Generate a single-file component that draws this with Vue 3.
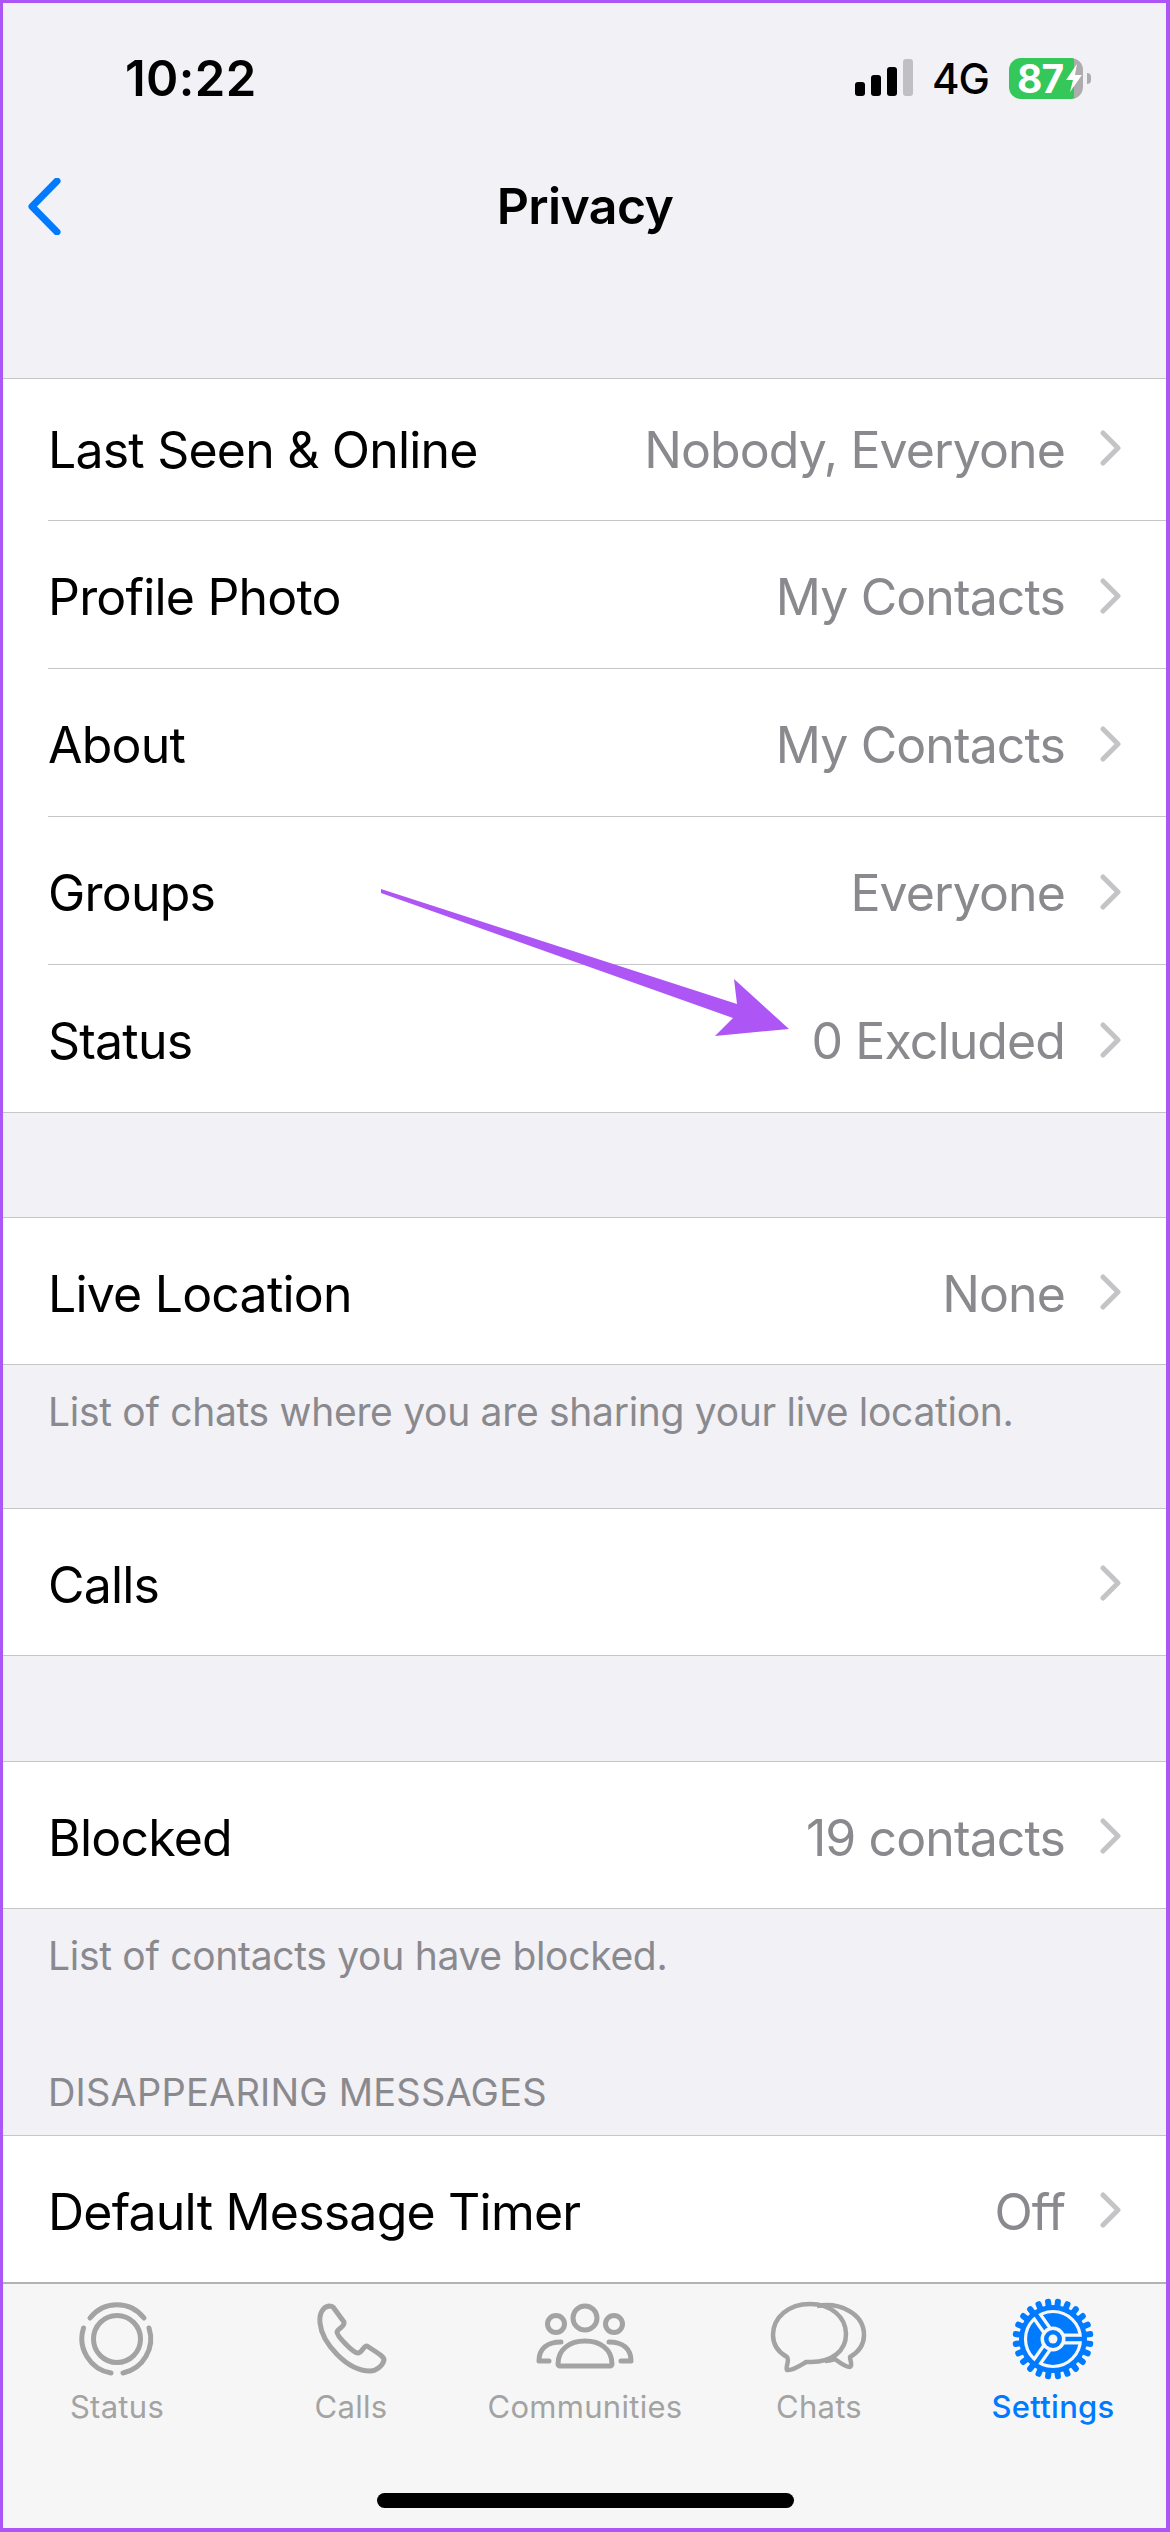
<script setup>
const privacyRows = [
  { label: 'Last Seen & Online', value: 'Nobody, Everyone', first: true },
  { label: 'Profile Photo', value: 'My Contacts' },
  { label: 'About', value: 'My Contacts' },
  { label: 'Groups', value: 'Everyone' },
  { label: 'Status', value: '0 Excluded' },
]
const teeth = Array.from({ length: 24 }, (_, i) => i * 15)
const spokes = [0, 125, 235]
</script>

<template>
  <div class="screen">
    <header class="top">
      <div class="status-bar">
        <span class="time">10:22</span>
        <div class="indicators">
          <div class="signal">
            <i class="b1"></i><i class="b2"></i><i class="b3"></i><i class="b4"></i>
          </div>
          <span class="net">4G</span>
          <div class="battery">
            <div class="battery-body">
              <span class="pct">87</span>
              <svg class="bolt" viewBox="0 0 18 28" width="18" height="28"><path d="M12 0 L1 16 H8 L5 28 L17 11 H10 Z" fill="#fff"/></svg>
            </div>
            <div class="nub"></div>
          </div>
        </div>
      </div>
      <nav class="nav">
        <svg class="back" viewBox="0 0 33 57" width="33" height="57"><path d="M29 3 L4 28.5 L29 54" fill="none" stroke="#007aff" stroke-width="7" stroke-linecap="round" stroke-linejoin="round"/></svg>
        <h1 class="title">Privacy</h1>
      </nav>
    </header>

    <main class="list">
      <section class="group multi">
        <div v-for="r in privacyRows" :key="r.label" class="row" :class="{ short: r.first }">
          <span class="label">{{ r.label }}</span>
          <span class="value">{{ r.value }}</span>
          <svg class="chev" viewBox="0 0 21 36" width="21" height="36"><path d="M3 3 L18 18 L3 33" fill="none" stroke="#c4c4c6" stroke-width="5" stroke-linecap="round" stroke-linejoin="round"/></svg>
        </div>
      </section>

      <section class="group gap-a">
        <div class="row">
          <span class="label">Live Location</span>
          <span class="value">None</span>
          <svg class="chev" viewBox="0 0 21 36" width="21" height="36"><path d="M3 3 L18 18 L3 33" fill="none" stroke="#c4c4c6" stroke-width="5" stroke-linecap="round" stroke-linejoin="round"/></svg>
        </div>
      </section>
      <p class="caption">List of chats where you are sharing your live location.</p>

      <section class="group">
        <div class="row">
          <span class="label">Calls</span>
          <svg class="chev" viewBox="0 0 21 36" width="21" height="36"><path d="M3 3 L18 18 L3 33" fill="none" stroke="#c4c4c6" stroke-width="5" stroke-linecap="round" stroke-linejoin="round"/></svg>
        </div>
      </section>

      <section class="group gap-b">
        <div class="row">
          <span class="label">Blocked</span>
          <span class="value">19 contacts</span>
          <svg class="chev" viewBox="0 0 21 36" width="21" height="36"><path d="M3 3 L18 18 L3 33" fill="none" stroke="#c4c4c6" stroke-width="5" stroke-linecap="round" stroke-linejoin="round"/></svg>
        </div>
      </section>
      <p class="caption">List of contacts you have blocked.</p>

      <p class="section-head">DISAPPEARING MESSAGES</p>
      <section class="group">
        <div class="row">
          <span class="label">Default Message Timer</span>
          <span class="value">Off</span>
          <svg class="chev" viewBox="0 0 21 36" width="21" height="36"><path d="M3 3 L18 18 L3 33" fill="none" stroke="#c4c4c6" stroke-width="5" stroke-linecap="round" stroke-linejoin="round"/></svg>
        </div>
      </section>
    </main>

    <footer class="tabs">
      <div class="tab-row">
        <div class="tab">
          <svg class="ico" viewBox="0 0 80 80" width="80" height="80">
            <g fill="none" stroke="#a3a3a3" stroke-width="5" stroke-linecap="round">
              <circle cx="40" cy="40" r="23.5"/>
              <path d="M13 19 A34 34 0 0 1 67 19"/>
              <path d="M6.5 29 A35 35 0 0 0 34 74"/>
              <path d="M72 29 A35 35 0 0 1 46 74"/>
            </g>
          </svg>
          <span>Status</span>
        </div>
        <div class="tab">
          <svg class="ico" viewBox="0 0 80 80" width="80" height="80">
            <g transform="translate(6 4)">
              <path d="M12 3 C6 4 2 10 3 20 C5 40 30 68 53 68 C60 68 66 62 67 57 C67 54 64 52 50 43 C47 42 45 50 41 50 C36 50 20 33 20 29 C20 26 28 24 27 19 L16 4 C15 3 13 3 12 3 Z" fill="none" stroke="#a3a3a3" stroke-width="5" stroke-linejoin="round"/>
            </g>
          </svg>
          <span>Calls</span>
        </div>
        <div class="tab">
          <svg class="ico wide" viewBox="0 0 100 80" width="100" height="80">
            <g fill="none" stroke="#a3a3a3" stroke-width="5" stroke-linecap="round" stroke-linejoin="round">
              <circle cx="50" cy="19" r="12"/>
              <circle cx="21" cy="25" r="8.5"/>
              <circle cx="79" cy="25" r="8.5"/>
              <path d="M23 65 C23 50 35 42 50 42 C65 42 77 50 77 65 C77 66 76 67 75 67 H25 C24 67 23 66 23 65 Z"/>
              <path d="M26 43 C12 43 4 50 4 62 H14"/>
              <path d="M74 43 C88 43 96 50 96 62 H86"/>
            </g>
          </svg>
          <span>Communities</span>
        </div>
        <div class="tab">
          <svg class="ico wide" viewBox="0 0 100 80" width="100" height="80">
            <g fill="none" stroke="#a3a3a3" stroke-width="4.5" stroke-linejoin="round">
              <path d="M48 7 C70 3 95 14 95 36 C95 47 88 54 81 58 C81 62 84 66 81 68 C76 68 70 63 66 60 C63 61 60 62 56 62"/>
              <path d="M41 5 C20 5 4 18 4 36 C4 46 9 53 18 58 C21 62 16 68 18 71 C24 72 32 66 37 63 C39 63 40 63 42 63 C63 63 77 52 77 35 C77 18 62 5 41 5 Z"/>
            </g>
          </svg>
          <span>Chats</span>
        </div>
        <div class="tab active">
          <svg class="ico" viewBox="-42 -42 84 84" width="84" height="84">
            <rect v-for="a in teeth" :key="a" x="31" y="-3" width="9.5" height="6" rx="2.5" fill="#007aff" :transform="`rotate(${a + 7.5})`"/>
            <circle r="34" fill="#007aff"/>
            <circle r="27.5" fill="none" stroke="#f6f6f6" stroke-width="3.2"/>
            <g v-for="s in spokes" :key="s" :transform="`rotate(${s})`">
              <rect x="0" y="-5.5" width="28" height="11" fill="#f6f6f6"/>
              <rect x="0" y="-2.2" width="33" height="4.4" fill="#007aff"/>
            </g>
            <circle r="12.5" fill="#f6f6f6"/>
            <circle r="9" fill="#007aff"/>
            <circle r="4.5" fill="#f6f6f6"/>
          </svg>
          <span>Settings</span>
        </div>
      </div>
      <div class="home"></div>
    </footer>

    <svg class="arrow" viewBox="0 0 1170 2532" width="1170" height="2532">
      <path d="M381 889 L737 1004 L734 979 L789 1029 L715 1036 L733 1018 L381 893 Z" fill="#ae55f5"/>
    </svg>
    <div class="frame"></div>
  </div>
</template>

<style>
html, body { margin: 0; padding: 0; background: #f2f1f6; }
</style>

<style scoped>
.screen {
  position: relative;
  width: 1170px;
  height: 2532px;
  overflow: hidden;
  display: flex;
  flex-direction: column;
  background: #f2f1f6;
  font-family: Inter, "Liberation Sans", sans-serif;
  color: #000;
}
.top { height: 378px; flex: none; }
.status-bar {
  height: 156px;
  display: flex;
  align-items: center;
  justify-content: space-between;
  padding: 0 79px 0 125px;
}
.time { font-size: 49px; font-weight: 600; letter-spacing: 0.4px; }
.indicators { display: flex; align-items: center; }
.signal { display: flex; align-items: flex-end; gap: 6px; height: 37px; margin-top: -1px; }
.signal i { display: block; width: 10px; border-radius: 3px; background: #000; }
.signal .b1 { height: 14px; }
.signal .b2 { height: 21px; }
.signal .b3 { height: 29px; }
.signal .b4 { height: 37px; background: #c0bfc4; }
.net { font-size: 42px; font-weight: 500; margin-left: 19px; letter-spacing: -1px; }
.battery { display: flex; align-items: center; margin-left: 20px; }
.battery-body {
  width: 74px;
  height: 41px;
  border-radius: 12px;
  display: flex;
  align-items: center;
  padding-left: 8px;
  box-sizing: border-box;
  background: linear-gradient(90deg, #34c759 65px, #adadaf 65px);
}
.pct { font-size: 39px; font-weight: 700; color: #fff; letter-spacing: -1px; line-height: 41px; }
.bolt { margin-left: 2px; }
.nub { width: 4px; height: 11px; border-radius: 0 4px 4px 0; background: #adadaf; margin-left: 4px; }
.nav {
  position: relative;
  height: 100px;
  display: flex;
  align-items: center;
  justify-content: center;
}
.back { position: absolute; left: 28px; top: 22px; }
.title { margin: 0; font-size: 50px; font-weight: 600; letter-spacing: -0.6px; }

.list { flex: 1; min-height: 0; overflow: hidden; }
.group {
  background: #fff;
  border-top: 1px solid #c6c6c8;
  padding-left: 48px;
}
.row {
  height: 147px;
  display: flex;
  align-items: center;
  padding-top: 5px;
  padding-right: 49px;
  box-sizing: border-box;
  border-bottom: 1px solid #c6c6c8;
}
.multi .row { height: 148px; }
.multi .row.short { height: 142px; padding-top: 0; }
.group .row:last-child { margin-left: -48px; padding-left: 48px; }
.label { flex: 1; font-size: 50px; letter-spacing: -0.8px; }
.value { font-size: 50px; color: #8a8a8e; letter-spacing: -0.9px; }
.chev { flex: none; margin-left: 35px; margin-top: -3px; }
.gap-a { margin-top: 104px; }
.gap-b { margin-top: 105px; }
.caption {
  margin: 0;
  height: 143px;
  padding: 23px 0 0 48px;
  box-sizing: border-box;
  font-size: 39px;
  line-height: 48px;
  color: #8a8a8e;
  letter-spacing: -0.3px;
}
.section-head {
  margin: 0;
  height: 83px;
  padding: 18px 0 0 48px;
  box-sizing: border-box;
  font-size: 38px;
  line-height: 44px;
  letter-spacing: 0.2px;
  color: #8a8a8e;
}
.tabs {
  flex: none;
  height: 250px;
  box-sizing: border-box;
  background: #f6f6f6;
  border-top: 2px solid #b2b2b2;
  position: relative;
}
.tab-row { display: grid; grid-template-columns: repeat(5, 1fr); padding-top: 13px; }
.tab {
  display: flex;
  flex-direction: column;
  align-items: center;
  gap: 7px;
  font-size: 31px;
  letter-spacing: 0.3px;
  color: #a3a3a3;
}
.tab.active { color: #007aff; font-weight: 500; }
.ico { display: block; height: 84px; }
.home {
  position: absolute;
  left: 377px;
  top: 209px;
  width: 417px;
  height: 15px;
  border-radius: 8px;
  background: #000;
}
.arrow { position: absolute; left: 0; top: 0; pointer-events: none; }
.frame {
  position: absolute;
  inset: 0;
  border: 3px solid #ae55f5;
  border-bottom-width: 4px;
  border-right-width: 4px;
  pointer-events: none;
}
</style>
